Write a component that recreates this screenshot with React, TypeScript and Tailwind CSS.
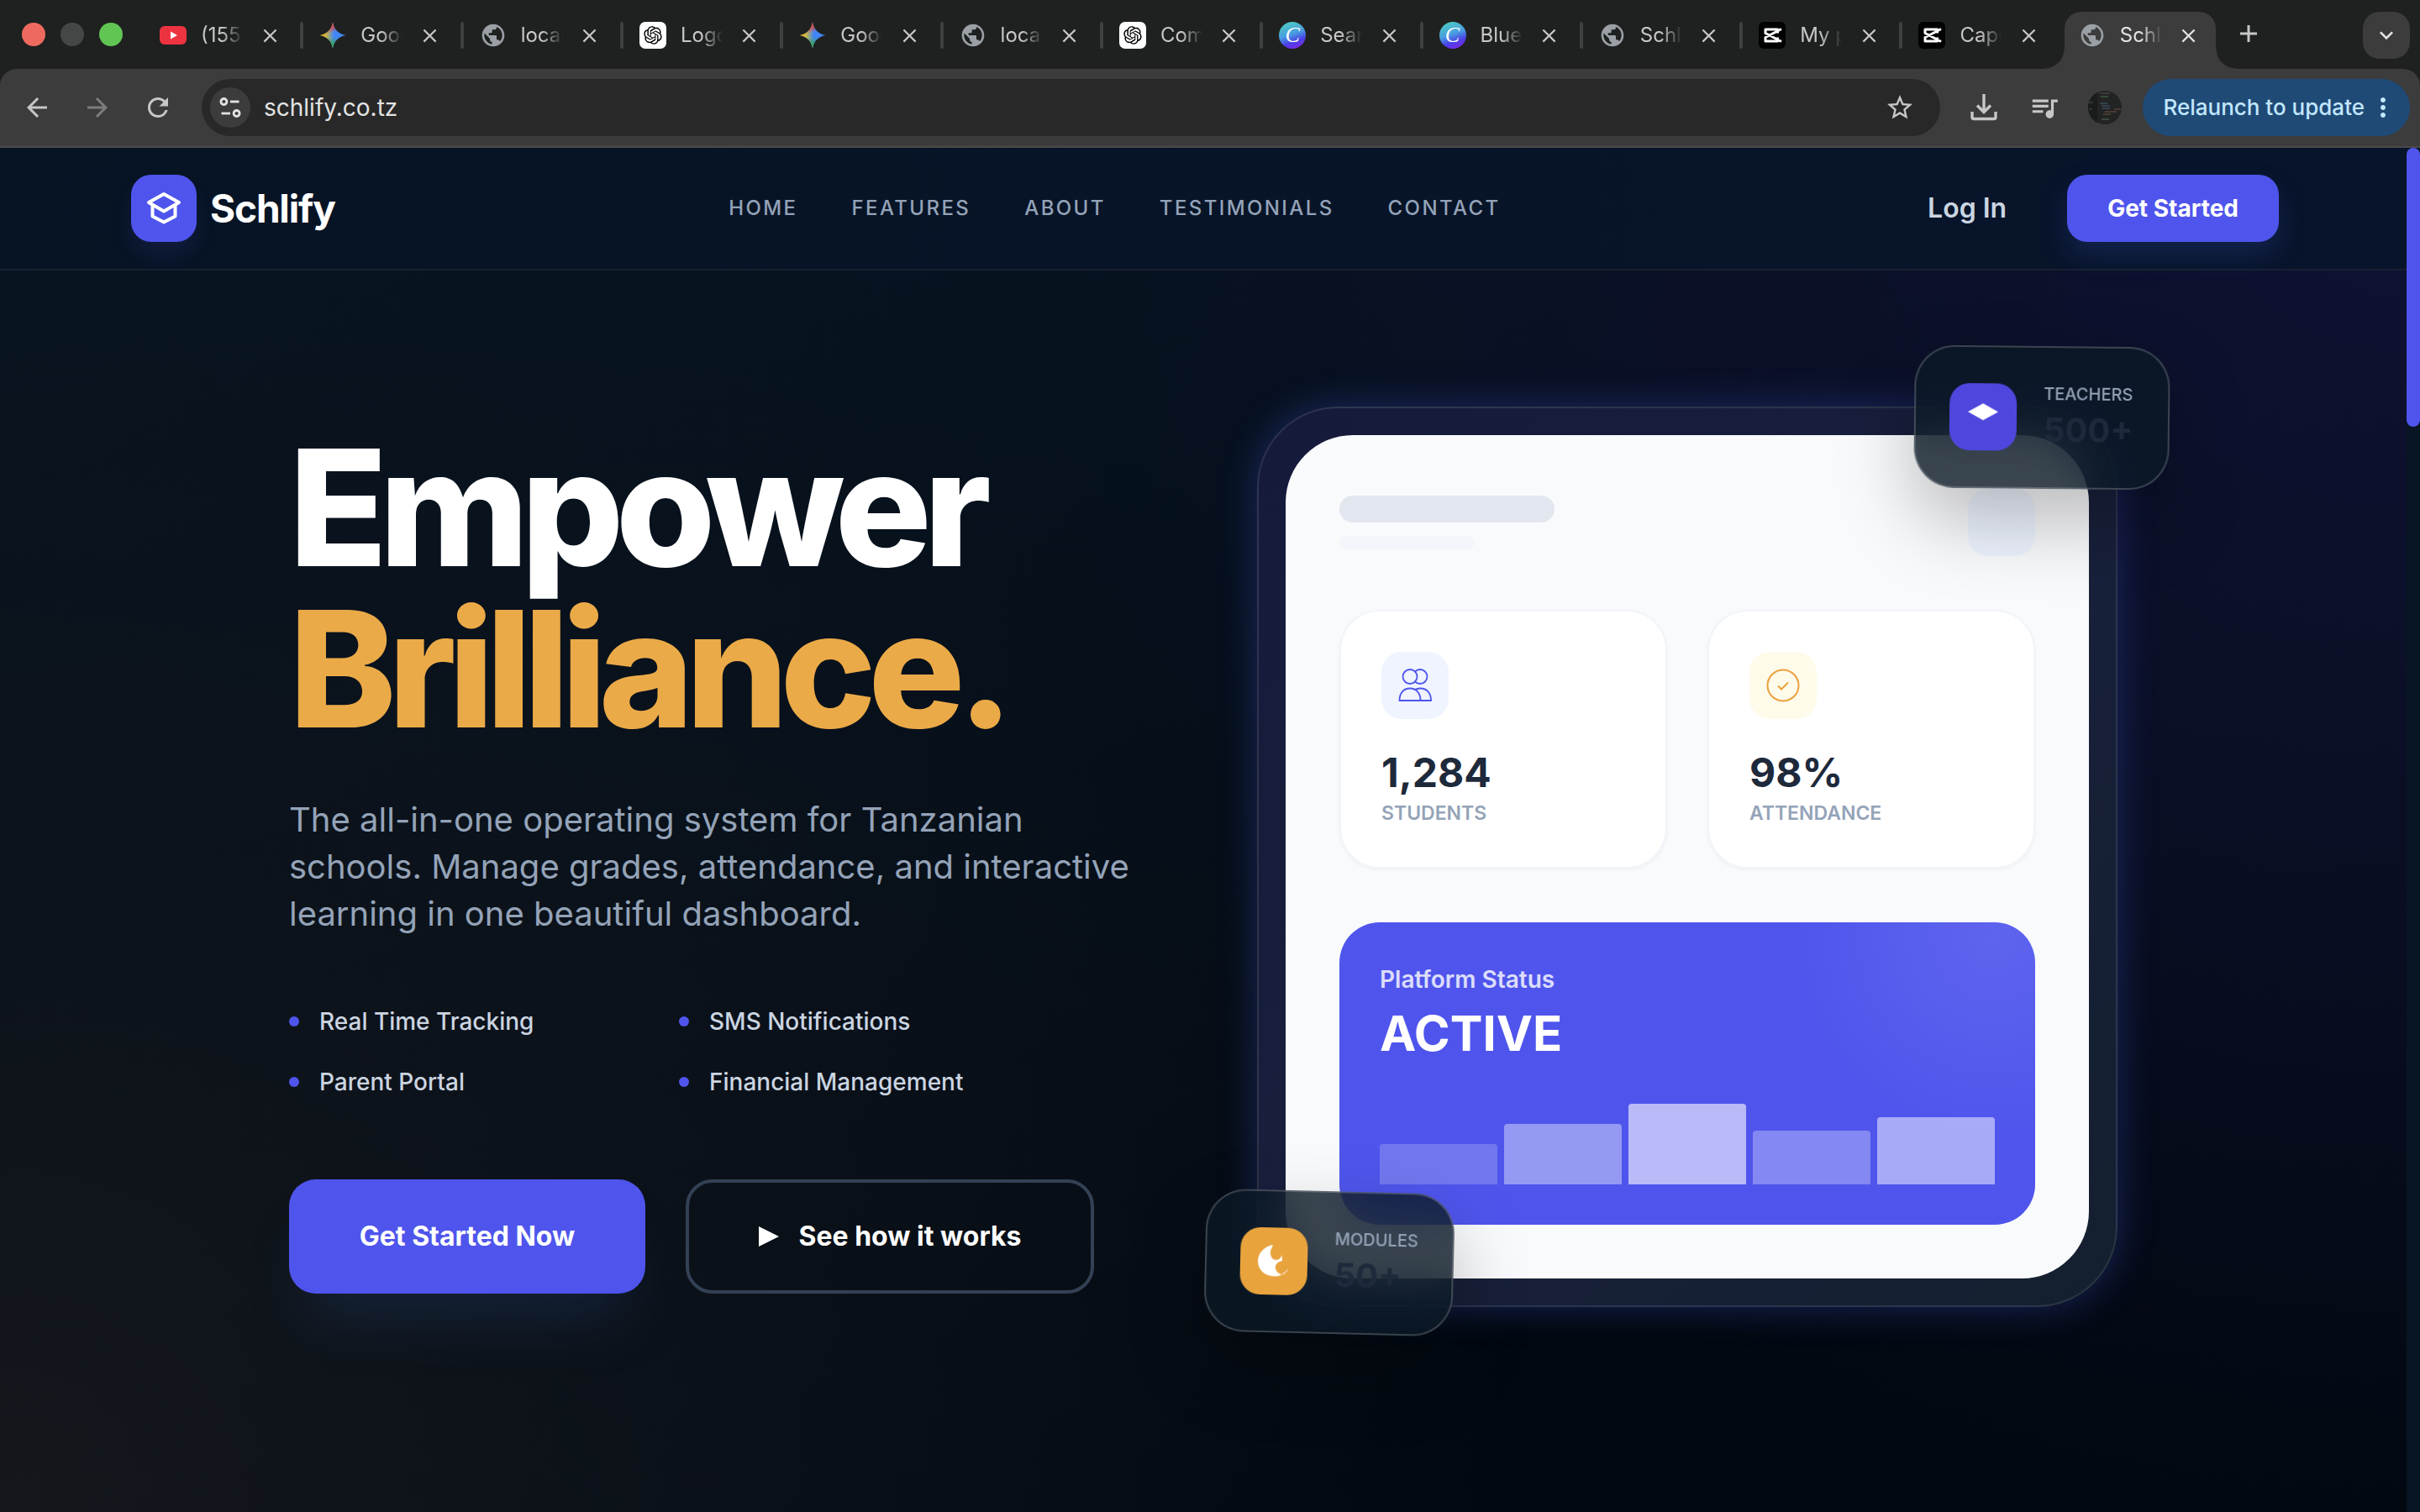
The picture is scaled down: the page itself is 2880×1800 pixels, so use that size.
import React from 'react';
import {
    MdArrowBack,
    MdArrowForward,
    MdClose,
    MdExpandMore,
    MdMoreVert,
    MdOutlineStarBorder,
    MdPublic,
    MdQueueMusic,
    MdRefresh,
} from 'react-icons/md';
import { RiOpenaiFill } from 'react-icons/ri';

/* ---------- favicons ---------- */

const YoutubeIcon = () => (
    <svg viewBox="0 0 32 32" className="size-8">
        <rect x="0" y="5" width="32" height="22" rx="6" fill="#ee3340" />
        <path d="M13 11.5 21 16l-8 4.5z" fill="#fff" />
    </svg>
);

const GeminiIcon = () => (
    <svg viewBox="0 0 32 32" className="size-8">
        <defs>
            <linearGradient id="gemini-base" x1="0" y1="0" x2="1" y2="0">
                <stop offset="0" stopColor="#f5c32c" />
                <stop offset="0.25" stopColor="#c9b84a" />
                <stop offset="0.55" stopColor="#4285f4" />
                <stop offset="1" stopColor="#4285f4" />
            </linearGradient>
            <linearGradient id="gemini-top" x1="0" y1="0" x2="0.3" y2="1">
                <stop offset="0" stopColor="#ea4335" />
                <stop offset="0.3" stopColor="#ea4335" stopOpacity="0.8" />
                <stop offset="0.5" stopColor="#ea4335" stopOpacity="0" />
            </linearGradient>
            <linearGradient id="gemini-bottom" x1="0" y1="1" x2="0" y2="0">
                <stop offset="0" stopColor="#34a853" />
                <stop offset="0.2" stopColor="#34a853" stopOpacity="0.8" />
                <stop offset="0.42" stopColor="#34a853" stopOpacity="0" />
            </linearGradient>
        </defs>
        {['url(#gemini-base)', 'url(#gemini-top)', 'url(#gemini-bottom)'].map((fill) => (
            <path key={fill} d="M16 .5c1.600 8.500 6.500 13.700 15.500 15.500-9 1.800-13.900 7-15.500 15.500C14.400 23 9.500 17.800.5 16 9.500 14.200 14.400 9 16 .5z" fill={fill} />
        ))}
    </svg>
);

const GlobeIcon = () => <MdPublic className="size-8 text-[#9aa0a6]" />;

const OpenAiIcon = () => (
    <span className="flex size-8 items-center justify-center rounded-[7px] bg-white">
        <RiOpenaiFill className="size-[26px] text-black" />
    </span>
);

const CanvaIcon = () => (
    <span className="flex size-8 items-center justify-center rounded-full bg-[linear-gradient(160deg,#4cc9c4_10%,#4a9fe0_45%,#4a3fe6_70%,#8a25e8_95%)] font-['Liberation_Serif',serif] text-[26px] leading-none text-white italic">
        C
    </span>
);

const CapCutIcon = () => (
    <svg viewBox="0 0 32 32" className="size-8">
        <rect width="32" height="32" rx="6" fill="#000" />
        <path d="M27 8.500 8 18.500v4.500h14.500v-4.500M27 23.500 8 13.500V9h14.500v4.500" fill="none" stroke="#fff" strokeWidth="3" strokeLinejoin="round" />
    </svg>
);

const tabs = [
    { icon: YoutubeIcon, title: '(155)' },
    { icon: GeminiIcon, title: 'Goog' },
    { icon: GlobeIcon, title: 'local' },
    { icon: OpenAiIcon, title: 'Logo' },
    { icon: GeminiIcon, title: 'Goog' },
    { icon: GlobeIcon, title: 'local' },
    { icon: OpenAiIcon, title: 'Com' },
    { icon: CanvaIcon, title: 'Sear' },
    { icon: CanvaIcon, title: 'Blue' },
    { icon: GlobeIcon, title: 'Schl' },
    { icon: CapCutIcon, title: 'My p' },
    { icon: CapCutIcon, title: 'CapC' },
    { icon: GlobeIcon, title: 'Schl' },
];

const TabStrip: React.FC = () => (
    <div className="flex h-[82px] items-end bg-[#1f2120]">
        <div className="flex h-[82px] w-[173px] items-center gap-[18px] pl-[26px]">
            <span className="size-7 rounded-full bg-[#ee6a5f]" />
            <span className="size-7 rounded-full bg-[#454746]" />
            <span className="size-7 rounded-full bg-[#61c554]" />
        </div>
        <ul className="flex h-[68px] min-w-0 flex-1">
            {tabs.map(({ icon: Icon, title }, i) => {
                const active = i === tabs.length - 1;
                return (
                    <li key={i} className="min-w-0 flex-1">
                        <div
                            className={
                                active
                                    ? "relative mr-[10px] flex h-full items-center rounded-t-[20px] bg-[#3c3c3c] pb-3 pl-[17px] text-[#e3e3e3] before:absolute before:bottom-0 before:-left-6 before:size-6 before:bg-[radial-gradient(circle_at_0_0,transparent_23px,#3c3c3c_24px)] before:content-[''] after:absolute after:-right-6 after:bottom-0 after:size-6 after:bg-[radial-gradient(circle_at_100%_0,transparent_23px,#3c3c3c_24px)] after:content-['']"
                                    : 'flex h-full items-center pb-3 pl-[17px] text-[#c7c7c7]'
                            }
                        >
                            <span className="flex size-8 shrink-0 items-center justify-center">
                                <Icon />
                            </span>
                            <span className="ml-[17px] w-[50px] shrink-0 overflow-hidden text-[24px] leading-8 whitespace-nowrap [mask-image:linear-gradient(to_right,#000_50%,transparent)]">
                                {title}
                            </span>
                            <button aria-label="Close tab" className="ml-5 flex size-6 shrink-0 items-center justify-center">
                                <MdClose className="size-[27px] shrink-0" />
                            </button>
                            {i < tabs.length - 2 && <span className="mr-[2px] ml-auto h-8 w-1 rounded-full bg-[#3f4140]" />}
                        </div>
                    </li>
                );
            })}
        </ul>
        <button aria-label="New tab" className="mb-[22px] ml-[9px] flex size-10 items-center justify-center text-[#c7c7c7]">
            <svg viewBox="0 0 24 24" className="size-6" stroke="currentColor" strokeWidth="3">
                <path d="M12 2v20M2 12h20" />
            </svg>
        </button>
        <button aria-label="Search tabs" className="mr-3 mb-3 ml-[116px] flex size-14 items-center justify-center rounded-[20px] bg-[#3c3c3c] text-[#e3e3e3]">
            <MdExpandMore className="size-8" />
        </button>
    </div>
);

const Toolbar: React.FC = () => (
    <div className="bg-[#1f2120]">
        <div className="flex h-[94px] items-center rounded-t-[20px] border-b-2 border-[#4a4a4a] bg-[#3c3c3c] px-3 text-[#c7c7c7]">
            <div className="ml-2 flex gap-6">
                <button aria-label="Back" className="flex size-12 items-center justify-center">
                    <MdArrowBack className="size-9" />
                </button>
                <button aria-label="Forward" className="flex size-12 items-center justify-center text-[#7c7c7c]">
                    <MdArrowForward className="size-9" />
                </button>
                <button aria-label="Reload" className="flex size-12 items-center justify-center">
                    <MdRefresh className="size-9" />
                </button>
            </div>
            <div className="ml-7 flex h-[68px] flex-1 items-center rounded-full bg-[#282828] pr-[28px] pl-[10px]">
                <button aria-label="View site information" className="flex size-12 items-center justify-center rounded-full bg-[#3c3c3c] text-[#e3e3e3]">
                    <svg viewBox="0 0 24 24" className="size-7" fill="none" stroke="currentColor" strokeWidth="2.400">
                        <circle cx="5.500" cy="6" r="3" />
                        <path d="M12 6h9" />
                        <circle cx="18.500" cy="18" r="3" />
                        <path d="M3 18h9" />
                    </svg>
                </button>
                <input aria-label="Address and search bar" defaultValue="schlify.co.tz" className="ml-4 min-w-0 flex-1 bg-transparent text-[28px] leading-9 text-[#e3e3e3] outline-none" />
                <button aria-label="Bookmark this tab" className="flex size-10 items-center justify-center">
                    <MdOutlineStarBorder className="size-9" />
                </button>
            </div>
            <button aria-label="Downloads" className="ml-7 flex size-12 items-center justify-center">
                <svg viewBox="0 0 32 32" className="size-8" fill="none" stroke="currentColor" strokeWidth="3.400">
                    <path d="M16 0v21M8 13.500l8 8 8-8M2 21v6.500q0 2 2 2h24q2 0 2-2V21" />
                </svg>
            </button>
            <button aria-label="Media controls" className="ml-6 flex size-12 items-center justify-center">
                <MdQueueMusic className="size-[38px]" />
            </button>
            <button aria-label="Profile" className="ml-7 size-10 overflow-hidden rounded-full">
                <svg viewBox="0 0 40 40" className="size-10">
                    <rect width="40" height="40" fill="#222423" />
                    <rect width="11" height="40" fill="#1a1b1b" />
                    <g strokeWidth="1.400" fill="none" opacity="0.7">
                        <path d="M14 3h12M0 14h6M1 22h4" stroke="#4c5250" />
                        <path d="M15 7h9M16 34h9" stroke="#4f6a4f" />
                        <path d="M14 15h9M16 18h10M17 21h9" stroke="#44597a" />
                        <path d="M20 25h14M18 28h9M31 22h8" stroke="#6b4c40" />
                    </g>
                </svg>
            </button>
            <button className="ml-[25px] flex h-[68px] items-center rounded-full bg-[#1f4a76] pr-[14px] pl-6 text-[26px] leading-9 font-medium whitespace-nowrap text-[#c2e7ff]">
                Relaunch to update
                <MdMoreVert className="ml-1 size-9" />
            </button>
        </div>
    </div>
);

/* ---------- site ---------- */

const navLinks = ['HOME', 'FEATURES', 'ABOUT', 'TESTIMONIALS', 'CONTACT'];

const Navbar: React.FC = () => (
    <header className="border-b-2 border-[#17212f] bg-[linear-gradient(to_right,#071424,#08142b)]">
        <div className="mx-auto flex h-36 max-w-[2560px] items-center justify-between">
            <a href="#home" className="ml-1 flex items-center gap-4">
                <span className="flex h-20 w-[78px] items-center justify-center rounded-3xl bg-[#4f55ec] shadow-[0_16px_24px_rgba(79,70,229,0.12)]">
                    <svg viewBox="0 0 44 44" className="size-11" fill="none" stroke="#fff" strokeWidth="4" strokeLinejoin="round">
                        <path d="M22 5 40 15 22 25.500 4 15z" />
                        <path d="M8.500 18v13.500L22 38.500l13.500-7V18" />
                    </svg>
                </span>
                <span className="text-[46px] leading-[60px] font-bold tracking-tight text-white">Schlify</span>
            </a>
            <nav className="mr-10 flex items-center gap-16 text-[24px] leading-8 font-medium tracking-widest text-[#94a3b8]">
                {navLinks.map((link) => (
                    <a key={link} href={`#${link.toLowerCase()}`}>
                        {link}
                    </a>
                ))}
            </nav>
            <div className="flex items-center gap-[72px]">
                <a href="#login" className="text-[32px] leading-10 font-semibold text-[#cbd5e1]">
                    Log In
                </a>
                <button className="h-20 rounded-3xl bg-[#4f55ec] px-12 text-[28px] leading-10 font-bold text-white shadow-[0_16px_32px_rgba(60,85,200,0.22)]">
                    Get Started
                </button>
            </div>
        </div>
    </header>
);

const features = ['Real Time Tracking', 'SMS Notifications', 'Parent Portal', 'Financial Management'];

const HeroText: React.FC = () => (
    <div className="pt-2">
        <h1 className="text-[192px] leading-none font-extrabold tracking-tighter text-white">
            Empower
            <br />
            <span className="text-[#ebaa48]">Brilliance.</span>
        </h1>
        <p className="mt-14 text-[40px] leading-[56px] text-[#94a3b8]">
            The all-in-one operating system for Tanzanian
            <br />
            schools. Manage grades, attendance, and interactive
            <br />
            learning in one beautiful dashboard.
        </p>
        <ul className="mt-20 grid max-w-[928px] grid-cols-2 gap-y-8">
            {features.map((feature) => (
                <li key={feature} className="flex items-center gap-6 text-[28px] leading-10 font-medium text-[#cbd5e1]">
                    <span className="size-3 rounded-full bg-[#4f55ec]" />
                    {feature}
                </li>
            ))}
        </ul>
        <div className="mt-24 flex gap-12">
            <button className="h-[136px] w-[424px] rounded-[32px] bg-[#4f55ec] text-[32px] leading-10 font-bold text-white shadow-[0_50px_70px_-24px_rgba(40,80,140,0.28)]">
                Get Started Now
            </button>
            <button className="flex h-[136px] w-[486px] items-center justify-center gap-6 rounded-[32px] border-4 border-[#334155] text-[32px] leading-10 font-bold text-white">
                <svg viewBox="0 0 24 24" className="size-6" fill="currentColor">
                    <path d="M0 0 24 12 0 24z" />
                </svg>
                See how it works
            </button>
        </div>
    </div>
);

const UsersIcon = () => (
    <svg viewBox="0 0 40 40" className="size-10" fill="#eff4ff" stroke="#4f55ec" strokeWidth="1.800">
        <circle cx="26" cy="9.500" r="8.500" />
        <path d="M14 38c0-9 5-14.500 12.500-14.500S39 29 39 38z" />
        <circle cx="14" cy="9.500" r="8.500" />
        <path d="M1.500 38c0-9 5-14.500 12.500-14.500S26.500 29 26.500 38z" />
    </svg>
);

const CheckIcon = () => (
    <svg viewBox="0 0 40 40" className="size-10" fill="none" stroke="#eba13b" strokeWidth="2">
        <circle cx="20" cy="20" r="18.500" />
        <path d="m14 20.500 4 4 8-8" />
    </svg>
);

const StatCards: React.FC = () => (
    <div className="mt-16 grid grid-cols-2 gap-12">
        <div className="rounded-[48px] border-2 border-[#f1f5f9] bg-white p-12 shadow-[0_2px_4px_rgba(0,0,0,0.04)]">
            <div className="mb-8 flex size-20 items-center justify-center rounded-3xl bg-[#eff4ff]">
                <UsersIcon />
            </div>
            <div className="text-[48px] leading-[64px] font-bold text-[#1e293b]">1,284</div>
            <div className="text-[23px] leading-8 font-semibold text-[#94a3b8]">STUDENTS</div>
        </div>
        <div className="rounded-[48px] border-2 border-[#f1f5f9] bg-white p-12 shadow-[0_2px_4px_rgba(0,0,0,0.04)]">
            <div className="mb-8 flex size-20 items-center justify-center rounded-3xl bg-[#fffbeb]">
                <CheckIcon />
            </div>
            <div className="text-[48px] leading-[64px] font-bold text-[#1e293b]">98%</div>
            <div className="text-[23px] leading-8 font-semibold text-[#94a3b8]">ATTENDANCE</div>
        </div>
    </div>
);

const PlatformStatus: React.FC = () => (
    <div className="mt-16 rounded-[48px] bg-[#4f55ec] bg-[radial-gradient(circle_at_94%_5%,rgba(255,255,255,0.09),transparent_240px)] p-12">
        <div className="text-[28px] leading-10 font-semibold text-white/80">Platform Status</div>
        <div className="mt-2 text-[58px] leading-[72px] font-bold text-white">ACTIVE</div>
        <div className="mt-12 flex h-24 items-end gap-2">
            <span className="h-12 flex-1 rounded-t bg-white/20" />
            <span className="h-18 flex-1 rounded-t bg-white/40" />
            <span className="h-24 flex-1 rounded-t bg-white/60" />
            <span className="h-16 flex-1 rounded-t bg-white/30" />
            <span className="h-20 flex-1 rounded-t bg-white/50" />
        </div>
    </div>
);

const Dashboard: React.FC = () => (
    <div className="relative rounded-[96px] border-2 border-white/10 bg-[linear-gradient(135deg,#151a3a,#18203c_50%,#141f2e)] p-8 shadow-[0_0_44px_rgba(50,70,170,0.45)]">
        <div className="rounded-[80px] bg-[#f9fafc] p-16">
            <div className="flex items-center justify-between">
                <div>
                    <div className="h-8 w-64 rounded-full bg-[#e2e6ee]" />
                    <div className="mt-4 h-4 w-40 rounded-full bg-[#f2f5fa]" />
                </div>
                <div className="size-20 rounded-3xl bg-[#eef4ff]" />
            </div>
            <StatCards />
            <PlatformStatus />
        </div>

        <div className="absolute -top-[74px] -right-16 rotate-[0.6deg] rounded-[48px] shadow-[0_40px_90px_rgba(0,0,0,0.25)]">
            <div className="absolute inset-0 rounded-[48px] opacity-50 backdrop-blur-xl" />
            <div className="relative flex items-center gap-8 rounded-[48px] border-2 border-white/20 bg-[#0a1824]/80 p-10">
                <span className="flex size-20 items-center justify-center rounded-3xl bg-[#4f46dd]">
                    <svg viewBox="0 0 40 40" className="size-10" fill="#fff">
                        <path d="M20 4 38 14 20 24 2 14z" />
                    </svg>
                </span>
                <div className="w-[108px]">
                    <div className="text-[20px] leading-[30px] font-medium text-[#94a3b8]">TEACHERS</div>
                    <div className="text-[40px] leading-[56px] font-bold text-[#1e293b]">500+</div>
                </div>
            </div>
        </div>

        <div className="absolute -bottom-[34px] -left-16 rotate-[1.4deg] rounded-[48px] shadow-[0_40px_90px_rgba(0,0,0,0.25)]">
            <div className="absolute inset-0 rounded-[48px] opacity-50 backdrop-blur-xl" />
            <div className="relative flex items-center gap-8 rounded-[48px] border-2 border-white/20 bg-[#0a1824]/80 p-10">
                <span className="flex size-20 items-center justify-center rounded-3xl bg-[#e8a33d]">
                    <svg viewBox="0 0 40 40" className="size-10" fill="#fff">
                        <path d="M18 .5C8 3 1 11 1 20c0 11 9 18 20 18 5 0 7-1 8.500-2.500C25 34.500 22 31 22 27s4-7 8-7.500l-.6-7.200c-.9 3.700-3.400 6.100-7.100 6.100-4.300 0-6.800-4.400-6.700-8.900C15.600 6 18.500 3 18 .5z" />
                        <path d="M30.300 36c3-1.500 6-4 6.700-7.500-1.500 2.500-4 5-6.700 6.500z" />
                    </svg>
                </span>
                <div className="w-[100px]">
                    <div className="text-[20px] leading-[30px] font-medium text-[#94a3b8]">MODULES</div>
                    <div className="text-[40px] leading-[56px] font-bold text-[#1e293b]">50+</div>
                </div>
            </div>
        </div>
    </div>
);

const App: React.FC = () => (
    <div className="flex min-h-screen flex-col bg-[#02060e] font-['Inter',sans-serif]">
        <TabStrip />
        <Toolbar />
        <div className="flex flex-1">
            <div className="flex min-w-0 flex-1 flex-col overflow-hidden bg-[radial-gradient(circle_at_100%_0%,#0f1233_0%,rgba(12,16,42,0.75)_26%,transparent_50%),radial-gradient(circle_at_0%_100%,#14171c_0%,rgba(14,19,26,0.75)_25%,transparent_55%),linear-gradient(to_bottom_right,#061524,#06111d_35%,#020810_75%)]">
                <Navbar />
                <main className="mx-auto grid w-full max-w-[2176px] flex-1 grid-cols-2 content-start items-center gap-32 pt-[162px]">
                    <HeroText />
                    <Dashboard />
                </main>
            </div>
            <div className="w-4 bg-[#081523]">
                <div className="h-[332px] rounded-full bg-[#4f55ec]" />
            </div>
        </div>
    </div>
);

export default App;
